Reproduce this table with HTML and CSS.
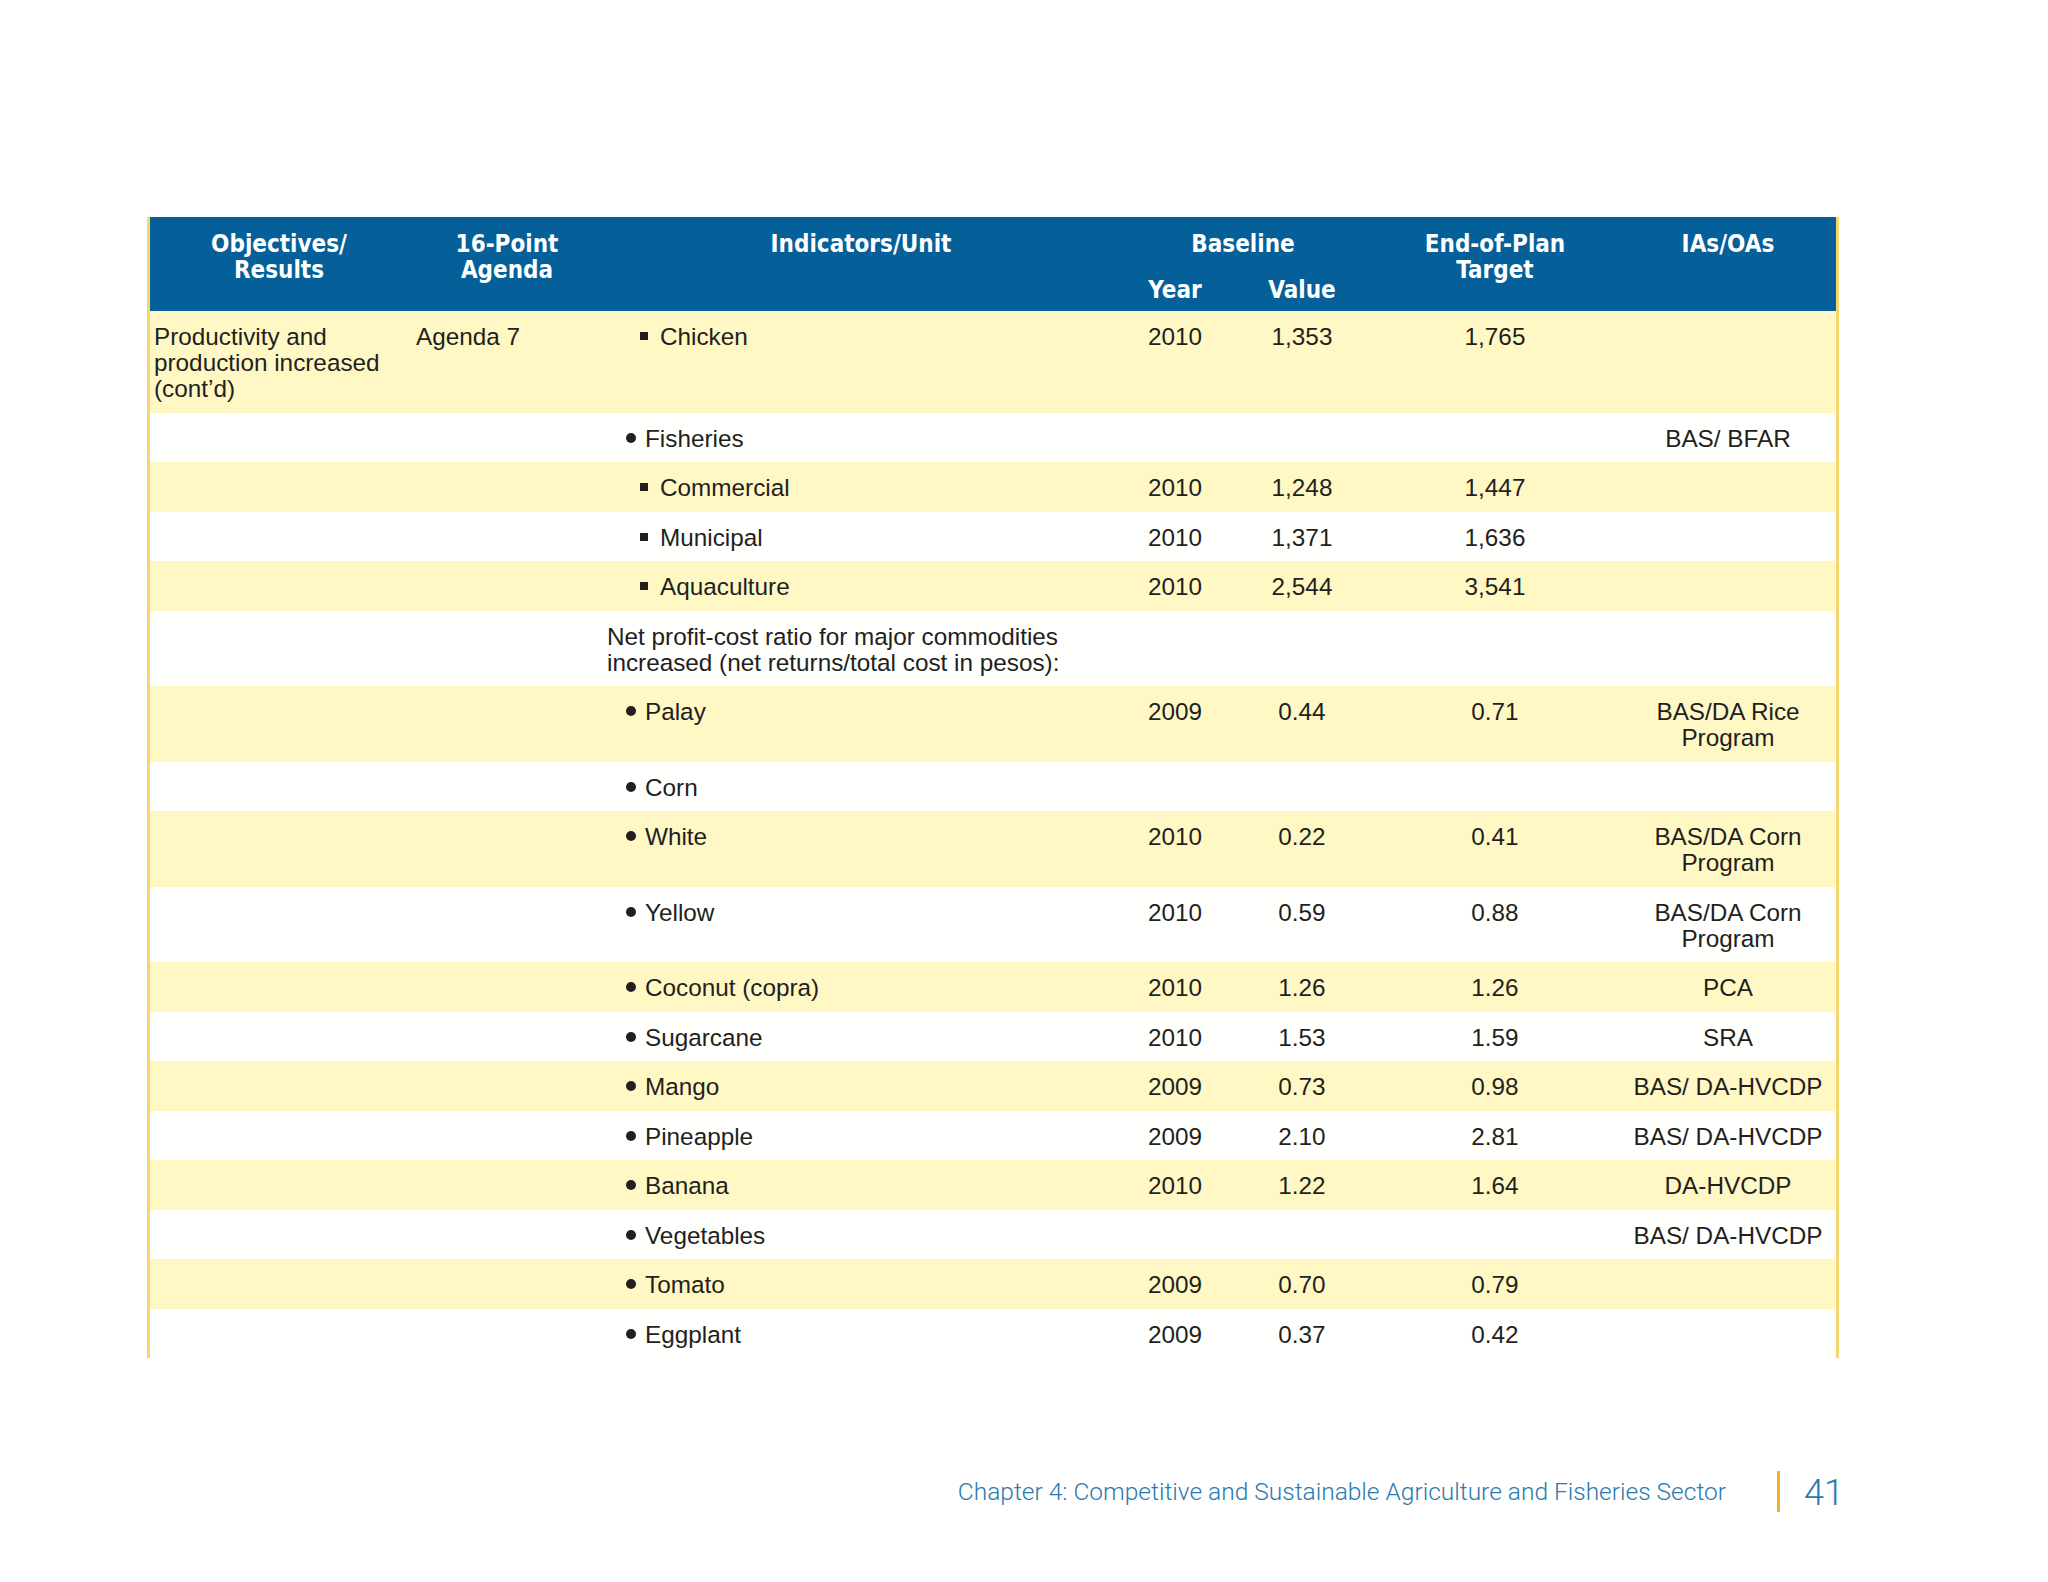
FILE: index.html
```html
<!DOCTYPE html>
<html lang="en">
<head>
<meta charset="utf-8">
<title>Chapter 4 table</title>
<link rel="stylesheet" href="styles.css">
</head>
<body>
<div class="page">
  <div class="tbl">
    <div class="thead">
      <div class="h">Objectives/<br>Results</div>
      <div class="h">16-Point<br>Agenda</div>
      <div class="h">Indicators/Unit</div>
      <div class="h base">
        <div class="base-title">Baseline</div>
        <div class="base-sub"><span>Year</span><span>Value</span></div>
      </div>
      <div class="h">End-of-Plan<br>Target</div>
      <div class="h">IAs/OAs</div>
    </div>

    <div class="row y">
      <div class="obj">Productivity and<br>production increased<br>(cont’d)</div>
      <div class="ag">Agenda 7</div>
      <div class="ind sq">Chicken</div>
      <div class="num">2010</div><div class="num">1,353</div><div class="num">1,765</div><div class="num"></div>
    </div>
    <div class="row w">
      <div class="obj"></div><div class="ag"></div>
      <div class="ind dot">Fisheries</div>
      <div class="num"></div><div class="num"></div><div class="num"></div><div class="num">BAS/ BFAR</div>
    </div>
    <div class="row y">
      <div class="obj"></div><div class="ag"></div>
      <div class="ind sq">Commercial</div>
      <div class="num">2010</div><div class="num">1,248</div><div class="num">1,447</div><div class="num"></div>
    </div>
    <div class="row w">
      <div class="obj"></div><div class="ag"></div>
      <div class="ind sq">Municipal</div>
      <div class="num">2010</div><div class="num">1,371</div><div class="num">1,636</div><div class="num"></div>
    </div>
    <div class="row y">
      <div class="obj"></div><div class="ag"></div>
      <div class="ind sq">Aquaculture</div>
      <div class="num">2010</div><div class="num">2,544</div><div class="num">3,541</div><div class="num"></div>
    </div>
    <div class="row w">
      <div class="obj"></div><div class="ag"></div>
      <div class="ind plain">Net profit-cost ratio for major commodities<br>increased (net returns/total cost in pesos):</div>
      <div class="num"></div><div class="num"></div><div class="num"></div><div class="num"></div>
    </div>
    <div class="row y">
      <div class="obj"></div><div class="ag"></div>
      <div class="ind dot">Palay</div>
      <div class="num">2009</div><div class="num">0.44</div><div class="num">0.71</div><div class="num">BAS/DA Rice<br>Program</div>
    </div>
    <div class="row w">
      <div class="obj"></div><div class="ag"></div>
      <div class="ind dot">Corn</div>
      <div class="num"></div><div class="num"></div><div class="num"></div><div class="num"></div>
    </div>
    <div class="row y">
      <div class="obj"></div><div class="ag"></div>
      <div class="ind dot">White</div>
      <div class="num">2010</div><div class="num">0.22</div><div class="num">0.41</div><div class="num">BAS/DA Corn<br>Program</div>
    </div>
    <div class="row w">
      <div class="obj"></div><div class="ag"></div>
      <div class="ind dot">Yellow</div>
      <div class="num">2010</div><div class="num">0.59</div><div class="num">0.88</div><div class="num">BAS/DA Corn<br>Program</div>
    </div>
    <div class="row y">
      <div class="obj"></div><div class="ag"></div>
      <div class="ind dot">Coconut (copra)</div>
      <div class="num">2010</div><div class="num">1.26</div><div class="num">1.26</div><div class="num">PCA</div>
    </div>
    <div class="row w">
      <div class="obj"></div><div class="ag"></div>
      <div class="ind dot">Sugarcane</div>
      <div class="num">2010</div><div class="num">1.53</div><div class="num">1.59</div><div class="num">SRA</div>
    </div>
    <div class="row y">
      <div class="obj"></div><div class="ag"></div>
      <div class="ind dot">Mango</div>
      <div class="num">2009</div><div class="num">0.73</div><div class="num">0.98</div><div class="num">BAS/ DA-HVCDP</div>
    </div>
    <div class="row w">
      <div class="obj"></div><div class="ag"></div>
      <div class="ind dot">Pineapple</div>
      <div class="num">2009</div><div class="num">2.10</div><div class="num">2.81</div><div class="num">BAS/ DA-HVCDP</div>
    </div>
    <div class="row y">
      <div class="obj"></div><div class="ag"></div>
      <div class="ind dot">Banana</div>
      <div class="num">2010</div><div class="num">1.22</div><div class="num">1.64</div><div class="num">DA-HVCDP</div>
    </div>
    <div class="row w">
      <div class="obj"></div><div class="ag"></div>
      <div class="ind dot">Vegetables</div>
      <div class="num"></div><div class="num"></div><div class="num"></div><div class="num">BAS/ DA-HVCDP</div>
    </div>
    <div class="row y">
      <div class="obj"></div><div class="ag"></div>
      <div class="ind dot">Tomato</div>
      <div class="num">2009</div><div class="num">0.70</div><div class="num">0.79</div><div class="num"></div>
    </div>
    <div class="row w">
      <div class="obj"></div><div class="ag"></div>
      <div class="ind dot">Eggplant</div>
      <div class="num">2009</div><div class="num">0.37</div><div class="num">0.42</div><div class="num"></div>
    </div>
  </div>

  <footer class="foot">
    <span class="chapter">Chapter 4: Competitive and Sustainable Agriculture and Fisheries Sector</span>
    <span class="bar"></span>
    <span class="pnum">41</span>
  </footer>
</div>
</body>
</html>
```

FILE: styles.css
```css
html, body {
  margin: 0;
  padding: 0;
  background: #ffffff;
}

.page {
  width: 2048px;
  height: 1582px;
  padding: 217px 0 0 147px;
  box-sizing: border-box;
}

.tbl {
  width: 1692px;
  border-left: 3px solid #f4d86e;
  border-right: 3px solid #f4d86e;
  box-sizing: border-box;
  font-family: "Liberation Sans", Arial, sans-serif;
  font-size: 24.3px;
  line-height: 26px;
  color: #231f20;
}

.thead,
.row {
  display: grid;
  grid-template-columns: 258px 198px 510px 118px 136px 250px 216px;
}

.thead {
  height: 94px;
  background: #05609a;
  color: #ffffff;
  font-family: "DejaVu Sans Condensed", "DejaVu Sans", sans-serif;
  font-stretch: condensed;
  font-weight: bold;
  font-size: 24px;
  line-height: 26px;
}

.h {
  text-align: center;
  padding-top: 13.5px;
}

.base {
  grid-column: span 2;
  display: flex;
  flex-direction: column;
  gap: 20px;
}

.base-sub {
  display: grid;
  grid-template-columns: 118px 136px;
}

.row > div {
  padding: 13px 0 10.5px;
}

.row.y { background: #fff8c4; }
.row.w { background: #fffffd; }

.row > .obj { padding-left: 4px; }
.row > .ag { padding-left: 8px; }

.row > .ind.plain { padding-left: 1px; }

.row > .ind.dot { padding-left: 20px; }
.ind.dot::before {
  content: "";
  display: inline-block;
  width: 10px;
  height: 10px;
  border-radius: 50%;
  background: #231f20;
  margin-right: 9px;
  vertical-align: 4px;
}

.row > .ind.sq { padding-left: 34px; }
.ind.sq::before {
  content: "";
  display: inline-block;
  width: 8px;
  height: 8px;
  background: #231f20;
  margin-right: 12px;
  vertical-align: 5px;
}

.num { text-align: center; }

.foot {
  width: 1697px;
  margin-top: 111px;
  display: flex;
  justify-content: flex-end;
  align-items: center;
  color: #2b79ad;
  font-family: Roboto, "Liberation Sans", sans-serif;
  font-weight: 300;
}

.chapter {
  font-size: 24.5px;
  line-height: 30px;
  padding-top: 2px;
}

.bar {
  width: 3px;
  height: 41px;
  background: #f4b227;
  margin-left: 51px;
  margin-right: 24px;
}

.pnum {
  font-size: 36px;
  line-height: 40px;
  padding-top: 4px;
}
```
